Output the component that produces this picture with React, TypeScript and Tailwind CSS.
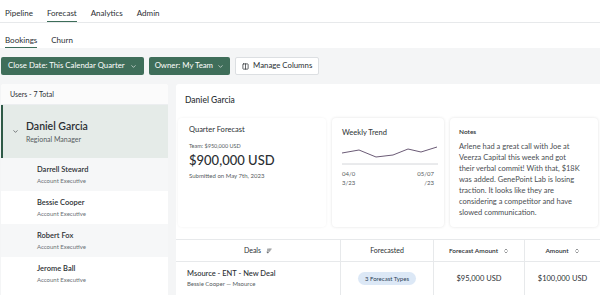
import { ChevronDown, Columns2, ArrowDownWideNarrow, ChevronsUpDown } from "lucide-react";

const REPS = [
  { name: "Darrell Steward", title: "Account Executive", striped: true },
  { name: "Bessie Cooper", title: "Account Executive", striped: false },
  { name: "Robert Fox", title: "Account Executive", striped: true },
  { name: "Jerome Ball", title: "Account Executive", striped: false },
];

export default function App() {
  return (
    <div className="w-[600px] h-[295px] overflow-hidden bg-[#f4f5f6] text-[#2b2f33] font-['Lato','Open_Sans',sans-serif]">
      {/* top tabs */}
      <div className="h-[23px] bg-white border-b border-[#e7e9eb] flex items-end gap-[14px] px-[5px] text-[8px]">
        <span className="pb-[3px]">Pipeline</span>
        <span className="pb-[2px] border-b-[1.5px] border-[#3d6d59]">Forecast</span>
        <span className="pb-[3px]">Analytics</span>
        <span className="pb-[3px]">Admin</span>
      </div>
      <div className="h-[25px] bg-white flex items-end gap-[14px] px-[5px] text-[8px]">
        <span className="pb-[1px] border-b-[1.5px] border-[#3d6d59]">Bookings</span>
        <span className="pb-[2px]">Churn</span>
      </div>

      {/* filters */}
      <div className="flex gap-[5px] px-[1px] pt-[9px] text-[7.8px]">
        <button className="h-[18px] px-[7px] rounded-[2px] bg-[#3f6e5a] text-white flex items-center gap-[5px]">
          Close Date: This Calendar Quarter
          <ChevronDown className="w-[7px] h-[7px]" strokeWidth={2} />
        </button>
        <button className="h-[18px] px-[6px] rounded-[2px] bg-[#3f6e5a] text-white flex items-center gap-[4px]">
          Owner: My Team
          <ChevronDown className="w-[7px] h-[7px]" strokeWidth={2} />
        </button>
        <button className="h-[18px] px-[6px] rounded-[2px] bg-white border border-[#dcdfe2] flex items-center gap-[4px]">
          <Columns2 className="w-[7px] h-[7px]" strokeWidth={2.5} />
          Manage Columns
        </button>
      </div>

      <div className="flex gap-[8px] pt-[9px] pl-[1px]">
        {/* users list */}
        <div className="w-[167px] shrink-0 bg-white rounded-t-[3px] overflow-hidden">
          <div className="h-[21px] bg-[#fbfbfb] border-b border-[#eceef0] flex items-center px-[9px] text-[7px]">
            Users - 7 Total
          </div>
          <div className="h-[53px] bg-[#e5ebe8] border-l-[2px] border-[#2f5a47] flex items-center">
            <ChevronDown className="w-[7px] h-[7px] ml-[9px] mr-[7px]" strokeWidth={2} />
            <div>
              <div className="text-[10.5px] font-semibold leading-[14px]">Daniel Garcia</div>
              <div className="text-[7px] text-[#555b60] mt-[1px]">Regional Manager</div>
            </div>
          </div>
          {REPS.map((r) => (
            <div
              key={r.name}
              className={`h-[33px] flex flex-col justify-center pl-[36px] ${r.striped ? "bg-[#f6f7f8]" : "bg-white"}`}
            >
              <div className="text-[7.5px] font-semibold leading-[10px]">{r.name}</div>
              <div className="text-[6px] text-[#6b7176] leading-[9px] mt-[1px]">{r.title}</div>
            </div>
          ))}
        </div>

        {/* detail */}
        <div className="flex-1 bg-white rounded-tl-[3px]">
          <div className="text-[8.5px] font-medium pl-[9px] pt-[10px] h-[34px]">Daniel Garcia</div>
          <div className="flex gap-[6px] pl-[2px] pr-[2px]">
            <div className="w-[148px] h-[109px] rounded-[4px] shadow-[0_0_3px_rgba(0,0,0,0.06)] pl-[11px] pt-[6px]">
              <div className="text-[7.5px]">Quarter Forecast</div>
              <div className="text-[5.5px] text-[#555b60] mt-[7px]">Team: $950,000 USD</div>
              <div className="text-[13px] font-medium leading-[15px] mt-[2px]">$900,000 USD</div>
              <div className="text-[6px] text-[#555b60] mt-[3px]">Submitted on May 7th, 2023</div>
            </div>
            <div className="w-[112px] h-[109px] rounded-[4px] shadow-[0_0_3px_rgba(0,0,0,0.12)] px-[10px] pt-[9px]">
              <div className="text-[7.5px] font-medium text-[#3a3e42]">Weekly Trend</div>
              <svg width="96" height="22" viewBox="0 0 96 22" className="mt-[6px] block">
                <polyline
                  points="0,9 17,6 34,13 51,11 66,5 79,8 95,3"
                  fill="none"
                  stroke="#6b5b76"
                  strokeWidth="1"
                />
                <line x1="0" y1="20" x2="96" y2="20" stroke="#c9ccd0" strokeWidth="0.8" />
              </svg>
              <div className="flex justify-between text-[6px] text-[#555b60] leading-[9px] mt-[3px]">
                <div>04/0<br />3/23</div>
                <div className="text-right">05/07<br />/23</div>
              </div>
            </div>
            <div className="flex-1 h-[109px] rounded-[4px] shadow-[0_0_3px_rgba(0,0,0,0.12)] pl-[9px] pr-[18px] pt-[9px]">
              <div className="text-[6.5px] font-semibold">Notes</div>
              <p className="text-[7.5px] leading-[11px] text-[#4a4e52] mt-[4px]">
                Arlene had a great call with Joe at Veerza Capital this week and got their verbal commit! With that, $18K was added. GenePoint Lab is losing traction. It looks like they are considering a competitor and have slowed communication.
              </p>
            </div>
          </div>

          {/* table */}
          <div className="mt-[12px] border-t border-[#e7e9eb] grid grid-cols-[165px_93px_91px_1fr] text-[7px]">
            <div className="h-[22px] flex items-center justify-center gap-[5px] border-r border-b border-[#e7e9eb]">
              Deals <ArrowDownWideNarrow className="w-[6px] h-[6px]" />
            </div>
            <div className="h-[22px] flex items-center justify-center border-r border-b border-[#e7e9eb]">Forecasted</div>
            <div className="h-[22px] flex items-center justify-center gap-[5px] border-r border-b border-[#e7e9eb] text-[6.5px] font-semibold">
              Forecast Amount <ChevronsUpDown className="w-[6px] h-[6px]" />
            </div>
            <div className="h-[22px] flex items-center justify-center gap-[5px] border-b border-[#e7e9eb] text-[6.5px] font-semibold">
              Amount <ChevronsUpDown className="w-[6px] h-[6px]" />
            </div>

            <div className="h-[33px] flex flex-col justify-center pl-[11px] border-r border-[#e7e9eb]">
              <div className="text-[7.5px] font-medium leading-[10px]">Msource - ENT - New Deal</div>
              <div className="text-[6px] text-[#555b60] leading-[9px]">Bessie Cooper — Msource</div>
            </div>
            <div className="h-[33px] flex items-center justify-center border-r border-[#e7e9eb]">
              <span className="px-[7px] py-[2px] rounded-full bg-[#dce8f6] text-[6px] text-[#2c3f57]">3 Forecast Types</span>
            </div>
            <div className="h-[33px] flex items-center justify-center border-r border-[#e7e9eb] text-[7.5px]">$95,000 USD</div>
            <div className="h-[33px] flex items-center justify-center text-[7.5px]">$100,000 USD</div>
          </div>
        </div>
      </div>
    </div>
  );
}
